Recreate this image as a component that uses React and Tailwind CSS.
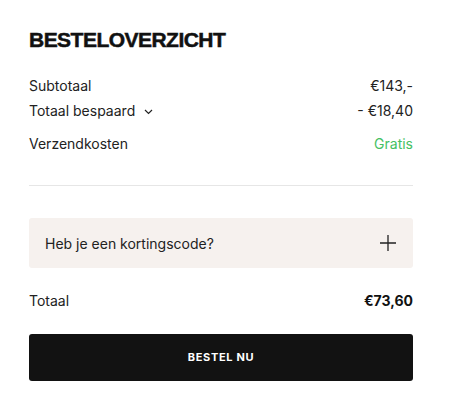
import React from 'react';

const rows = [
  { label: 'Subtotaal', value: '€143,-' },
  { label: 'Totaal bespaard', value: '- €18,40', toggle: true },
];

const Chevron = () => (
  <svg width="9" height="6" viewBox="0 0 9 6" fill="none" className="ml-[9px] mt-[1px]">
    <path d="M1 1l3.5 3.5L8 1" stroke="#222" strokeWidth="1.2" />
  </svg>
);

const Plus = () => (
  <svg width="18" height="18" viewBox="0 0 18 18" fill="none">
    <path d="M9 1v16M1 9h16" stroke="#222" strokeWidth="1.3" />
  </svg>
);

export default function App() {
  return (
    <div className="min-h-screen bg-white font-['Inter',sans-serif] text-[#222]">
      <div className="ml-[29px] w-[384px] pt-[28px]">
        <h1 className="font-['Liberation_Sans',sans-serif] text-[21px] leading-[24px] font-black tracking-[-0.025em] text-[#111] [-webkit-text-stroke:0.5px_#111]">
          BESTELOVERZICHT
        </h1>

        {/* prijsregels */}
        <div className="mt-[24px] text-[14px] leading-[20px]">
          {rows.map((r, i) => (
            <div key={r.label} className={`flex justify-between ${i > 0 ? 'mt-[5px]' : ''}`}>
              <span className="flex items-center">
                {r.label}
                {r.toggle && <Chevron />}
              </span>
              <span>{r.value}</span>
            </div>
          ))}
          <div className="mt-[13px] flex justify-between">
            <span>Verzendkosten</span>
            <span className="text-[#45c163]">Gratis</span>
          </div>
        </div>

        <div className="mt-[31px] h-px bg-[#e6e6e6]" />

        <button className="mt-[32px] flex h-[50px] w-full items-center justify-between rounded-[3px] bg-[#f6f1ee] pl-[16px] pr-[16px] text-[14px]">
          <span>Heb je een kortingscode?</span>
          <Plus />
        </button>

        <div className="mt-[23px] flex justify-between text-[14px] leading-[20px]">
          <span>Totaal</span>
          <span className="font-bold text-[#111]">€73,60</span>
        </div>

        <button className="mt-[23px] flex h-[47px] w-full items-center justify-center rounded-[3px] bg-[#121212] text-[11px] font-bold tracking-[0.06em] text-white">
          BESTEL NU
        </button>
      </div>
    </div>
  );
}
